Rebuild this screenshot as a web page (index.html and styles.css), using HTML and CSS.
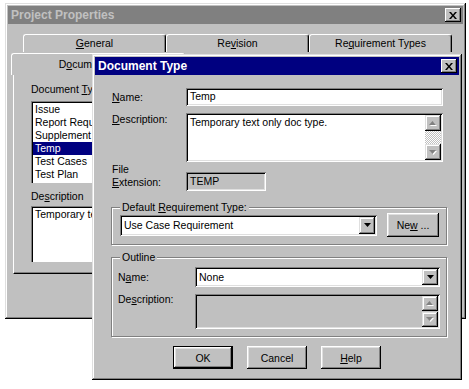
FILE: index.html
```html
<!DOCTYPE html>
<html lang="en">
<head>
    <meta charset="UTF-8">
    <title>Project Properties</title>
    <link rel="stylesheet" href="styles.css">
</head>
<body>
<div class="desktop">

    <!-- back window -->
    <div class="window props">
        <div class="titlebar inactive">
            <span>Project Properties</span>
            <button class="close-btn"><svg width="8" height="7" viewBox="0 0 8 7"><path d="M0 0h2l2 2.4L6 0h2L5 3.5 8 7H6L4 4.6 2 7H0l3-3.5z"/></svg></button>
        </div>
        <div class="props-body">
            <div class="tab-row back">
                <div class="tab"><u>G</u>eneral</div>
                <div class="tab">Re<u>v</u>ision</div>
                <div class="tab">Re<u>q</u>uirement Types</div>
            </div>
            <div class="tab-row front">
                <div class="tab selected">D<u>o</u>cument Types</div>
                <div class="tab tab-mid"></div>
                <div class="tab tab-last"></div>
            </div>
            <div class="tab-panel">
                <div class="label">Document <u>T</u>ypes:</div>
                <ul class="listbox">
                    <li>Issue</li>
                    <li>Report Requirement</li>
                    <li>Supplement</li>
                    <li class="picked">Temp</li>
                    <li>Test Cases</li>
                    <li>Test Plan</li>
                </ul>
                <div class="label desc-label">De<u>s</u>cription</div>
                <div class="desc-box">Temporary text</div>
            </div>
        </div>
    </div>

    <!-- front dialog -->
    <div class="window dialog">
        <div class="titlebar active">
            <span>Document Type</span>
            <button class="close-btn"><svg width="8" height="7" viewBox="0 0 8 7"><path d="M0 0h2l2 2.4L6 0h2L5 3.5 8 7H6L4 4.6 2 7H0l3-3.5z"/></svg></button>
        </div>
        <div class="dlg-body">
            <div class="form-row row-name">
                <label><u>N</u>ame:</label>
                <div class="field">Temp</div>
            </div>
            <div class="form-row row-desc">
                <label><u>D</u>escription:</label>
                <div class="field memo">
                    <div class="memo-text">Temporary text only doc type.</div>
                    <div class="vscroll">
                        <div class="sbtn"><svg width="8" height="5" viewBox="0 0 8 5"><path d="M4.5 1L8 5H1z" fill="#fff"/><path d="M3.5 0L7 4H0z" fill="#808080"/></svg></div>
                        <div class="track"></div>
                        <div class="sbtn"><svg width="8" height="5" viewBox="0 0 8 5"><path d="M1 1h7L4.5 5z" fill="#fff"/><path d="M0 0h7L3.5 4z" fill="#808080"/></svg></div>
                    </div>
                </div>
            </div>
            <div class="form-row row-ext">
                <label>File<br><u>E</u>xtension:</label>
                <div class="field readonly">TEMP</div>
            </div>

            <div class="group group-default">
                <span class="group-label">Default <u>R</u>equirement Type:</span>
                <div class="combo">
                    <span class="combo-text">Use Case Requirement</span>
                    <span class="combo-btn"><svg width="7" height="4" viewBox="0 0 7 4"><path d="M0 0h7L3.5 4z"/></svg></span>
                </div>
                <button class="btn btn-new">Ne<u>w</u> ...</button>
            </div>

            <div class="group group-outline">
                <span class="group-label">Outline</span>
                <label>N<u>a</u>me:</label>
                <div class="combo">
                    <span class="combo-text">None</span>
                    <span class="combo-btn"><svg width="7" height="4" viewBox="0 0 7 4"><path d="M0 0h7L3.5 4z"/></svg></span>
                </div>
                <label class="outline-desc-label">De<u>s</u>cription:</label>
                <div class="field readonly memo small-memo">
                    <div class="memo-text"></div>
                    <div class="vscroll">
                        <div class="sbtn"><svg width="8" height="5" viewBox="0 0 8 5"><path d="M4.5 1L8 5H1z" fill="#fff"/><path d="M3.5 0L7 4H0z" fill="#808080"/></svg></div>
                        <div class="sbtn"><svg width="8" height="5" viewBox="0 0 8 5"><path d="M1 1h7L4.5 5z" fill="#fff"/><path d="M0 0h7L3.5 4z" fill="#808080"/></svg></div>
                    </div>
                </div>
            </div>

            <div class="button-row">
                <button class="btn default">OK</button>
                <button class="btn">Cancel</button>
                <button class="btn"><u>H</u>elp</button>
            </div>
        </div>
    </div>

</div>
</body>
</html>
```

FILE: styles.css
```css
* {
    box-sizing: border-box;
}

body {
    margin: 0;
    background: #fff;
    font-family: "Liberation Sans", Arial, sans-serif;
    font-size: 10.5px;
    line-height: 13px;
    color: #000;
}

u {
    text-decoration-thickness: 1px;
    text-underline-offset: 1px;
}

.desktop {
    position: relative;
    width: 469px;
    height: 389px;
    overflow: hidden;
}

/* windows */
.window {
    position: absolute;
    display: flex;
    flex-direction: column;
    padding: 3px;
    background: #c0c0c0;
    box-shadow: inset -1px -1px #000, inset 1px 1px #dfdfdf,
                inset -2px -2px #808080, inset 2px 2px #fff;
}

.props {
    left: 5px;
    top: 3px;
    width: 461px;
    height: 316px;
}

.dialog {
    left: 92px;
    top: 54px;
    width: 370px;
    height: 326px;
    z-index: 2;
}

.titlebar {
    display: flex;
    align-items: center;
    justify-content: space-between;
    height: 18px;
    padding: 0 2px 0 3px;
    font-size: 12px;
    font-weight: bold;
}

.titlebar.active {
    background: #000080;
    color: #fff;
}

.titlebar.inactive {
    background: #808080;
    color: #c0c0c0;
}

.close-btn {
    display: flex;
    align-items: center;
    justify-content: center;
    width: 16px;
    height: 14px;
    padding: 0;
    border: 0;
    background: #c0c0c0;
    box-shadow: inset -1px -1px #000, inset 1px 1px #fff, inset -2px -2px #808080;
}

/* tabs */
.props-body {
    padding-top: 10px;
}

.tab-row {
    display: flex;
}

.tab-row.back {
    margin-left: 15px;
    height: 18px;
}

.tab-row.front {
    margin-left: 3px;
    height: 21px;
    align-items: flex-start;
}

.tab {
    width: 143px;
    height: 18px;
    line-height: 16px;
    text-align: center;
    border-top: 1px solid #fff;
    border-left: 1px solid #fff;
    border-right: 1px solid #000;
    border-radius: 3px 3px 0 0;
    box-shadow: inset -1px 0 #808080;
}

.tab.selected {
    position: relative;
    z-index: 1;
    width: 174px;
    height: 22px;
    line-height: 20px;
    margin-top: 1px;
    margin-bottom: -1px;
    background: #c0c0c0;
}

.tab.tab-mid {
    width: 115px;
    margin-top: 3px;
}

.tab.tab-last {
    width: 152px;
    margin-top: 3px;
    margin-left: 4px;
}

.tab-panel {
    width: 448px;
    height: 201px;
    margin-left: 5px;
    padding: 9px 0 0 17px;
    border-top: 1px solid #fff;
    border-left: 1px solid #fff;
    border-right: 1px solid #000;
    border-bottom: 1px solid #000;
    box-shadow: inset -1px -1px #808080;
}

.label {
    height: 13px;
    white-space: nowrap;
}

/* list and box run on under the dialog; clipped just past its left edge */
.listbox {
    width: 66px;
    height: 82px;
    margin: 5px 0 0;
    padding: 2px 0 2px 2px;
    overflow: hidden;
    list-style: none;
    background: #fff;
    box-shadow: inset 1px 1px #808080, inset 2px 2px #000;
}

.listbox li {
    height: 13px;
    padding-left: 2px;
    white-space: nowrap;
    overflow: hidden;
}

.listbox li.picked {
    background: #000080;
    color: #fff;
}

.desc-label {
    margin-top: 7px;
}

.desc-box {
    width: 66px;
    height: 56px;
    margin-top: 3px;
    padding: 2px 0 0 4px;
    overflow: hidden;
    white-space: nowrap;
    background: #fff;
    box-shadow: inset 1px 1px #808080, inset 2px 2px #000;
}

/* dialog body */
.dlg-body {
    display: flex;
    flex-direction: column;
    padding: 13px 16px 0 17px;
}

.form-row {
    display: grid;
    grid-template-columns: 74px 1fr;
}

.row-name {
    align-items: center;
}

.row-desc {
    margin-top: 7px;
    align-items: start;
}

.row-ext {
    margin-top: 1px;
    align-items: end;
}

.row-ext label {
    margin-bottom: 2px;
}

.field {
    height: 18px;
    padding: 2px 4px;
    background: #fff;
    box-shadow: inset 1px 1px #808080, inset -1px -1px #fff,
                inset 2px 2px #000, inset -2px -2px #dfdfdf;
}

.field.readonly {
    background: #c0c0c0;
}

.row-ext .field {
    width: 80px;
    height: 19px;
    padding-top: 3px;
}

.memo {
    display: flex;
    height: 49px;
    padding: 2px;
}

.memo-text {
    flex: 1;
    padding: 1px 2px;
}

.vscroll {
    display: flex;
    flex-direction: column;
    width: 16px;
}

.sbtn {
    display: flex;
    align-items: center;
    justify-content: center;
    height: 16px;
    background: #c0c0c0;
    box-shadow: inset -1px -1px #000, inset 1px 1px #dfdfdf,
                inset -2px -2px #808080, inset 2px 2px #fff;
}

.track {
    flex: 1;
    background: repeating-conic-gradient(#c0c0c0 0% 25%, #fff 0% 50%) 0 0 / 2px 2px;
}

/* group boxes */
.group {
    position: relative;
    margin-right: -4px;
    margin-left: -1px;
    border: 1px solid #808080;
    box-shadow: 1px 1px #fff, inset 1px 1px #fff;
}

.group-label {
    position: absolute;
    top: -6px;
    left: 8px;
    padding: 0 2px;
    line-height: 11px;
    background: #c0c0c0;
    white-space: nowrap;
}

.group-default {
    display: flex;
    align-items: center;
    gap: 10px;
    height: 38px;
    margin-top: 16px;
    padding: 5px 7px 7px 8px;
}

.group-default .combo {
    flex: 1;
    height: 21px;
}

.group-outline {
    display: grid;
    grid-template-columns: 77px 1fr;
    grid-template-rows: 20px 35px;
    row-gap: 7px;
    height: 80px;
    margin-top: 12px;
    padding: 9px 6px 7px 6px;
}

.group-outline label {
    align-self: center;
}

.group-outline .outline-desc-label {
    align-self: start;
    margin-top: -1px;
}

.combo {
    display: flex;
    align-items: stretch;
    padding: 2px;
    background: #fff;
    box-shadow: inset 1px 1px #808080, inset -1px -1px #fff,
                inset 2px 2px #000, inset -2px -2px #dfdfdf;
}

.combo-text {
    flex: 1;
    padding-left: 2px;
    display: flex;
    align-items: center;
}

.combo-btn {
    display: flex;
    align-items: center;
    justify-content: center;
    width: 16px;
    background: #c0c0c0;
    box-shadow: inset -1px -1px #000, inset 1px 1px #dfdfdf,
                inset -2px -2px #808080, inset 2px 2px #fff;
}

.small-memo {
    height: 35px;
}

.small-memo .vscroll {
    justify-content: space-between;
}

.small-memo .sbtn {
    height: 15px;
}

/* buttons */
.btn {
    width: 60px;
    height: 23px;
    padding: 0;
    border: 0;
    background: #c0c0c0;
    font-family: inherit;
    font-size: 10.5px;
    color: #000;
    box-shadow: inset -1px -1px #000, inset 1px 1px #fff,
                inset -2px -2px #808080, inset 2px 2px #dfdfdf;
}

.btn.default {
    border: 1px solid #000;
}

.btn-new {
    width: 52px;
    height: 24px;
}

.button-row {
    display: flex;
    justify-content: center;
    gap: 14px;
    margin: 9px -16px 0 -17px;
}
```
